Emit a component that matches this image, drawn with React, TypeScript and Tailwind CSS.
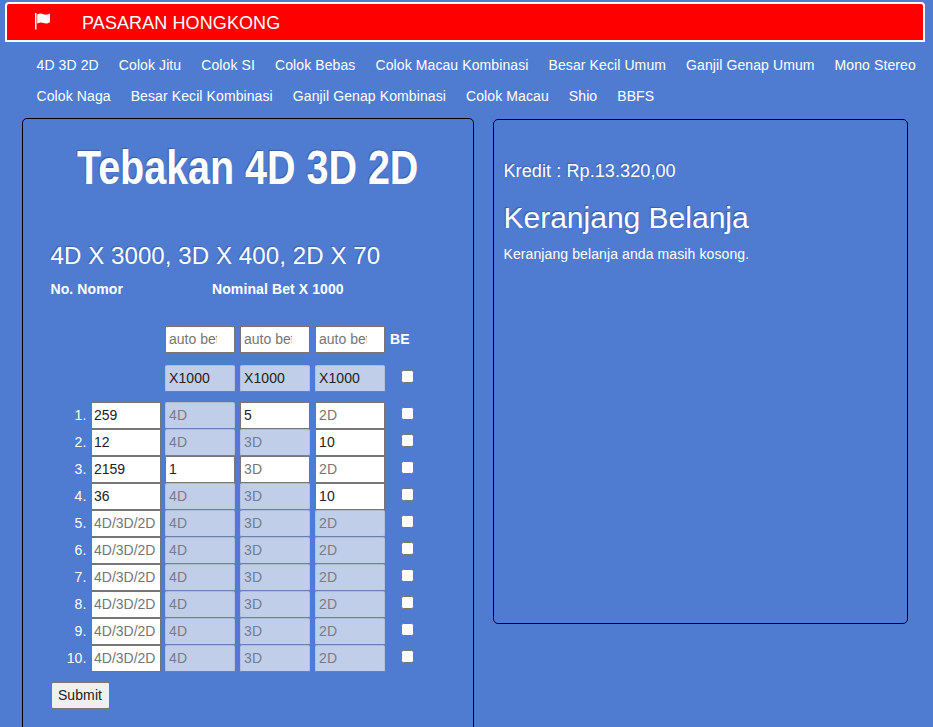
import React from 'react';
import clsx from 'clsx';

interface BetRow {
  nomor?: string;
  // undefined = disabled, '' = open but empty
  bets: [string?, string?, string?];
}

const MENU = [
  '4D 3D 2D',
  'Colok Jitu',
  'Colok SI',
  'Colok Bebas',
  'Colok Macau Kombinasi',
  'Besar Kecil Umum',
  'Ganjil Genap Umum',
  'Mono Stereo',
  'Colok Naga',
  'Besar Kecil Kombinasi',
  'Ganjil Genap Kombinasi',
  'Colok Macau',
  'Shio',
  'BBFS',
];

const BET_TYPES = ['4D', '3D', '2D'];

const ROWS: BetRow[] = [
  { nomor: '259', bets: [undefined, '5', ''] },
  { nomor: '12', bets: [undefined, undefined, '10'] },
  { nomor: '2159', bets: ['1', '', ''] },
  { nomor: '36', bets: [undefined, undefined, '10'] },
  { bets: [] },
  { bets: [] },
  { bets: [] },
  { bets: [] },
  { bets: [] },
  { bets: [] },
];

const Field: React.FC<React.InputHTMLAttributes<HTMLInputElement>> = ({ className, ...props }) => (
  <input
    type="text"
    className={clsx(
      'block h-[27px] w-[70px] shrink-0 rounded-none border border-[#767676] bg-white pb-[2px] text-[14px] text-[#222] placeholder:text-[#757575] placeholder:opacity-100',
      'disabled:rounded-[2px] disabled:border-x-[#b3c0dd] disabled:border-t-[#aebbd8] disabled:border-b-[#6b80ad] disabled:bg-[#c1cee9] disabled:placeholder:text-[#757c8c]',
      className
    )}
    {...props}
  />
);

const Check: React.FC = () => (
  <input
    type="checkbox"
    className="mt-[5px] ml-[11px] block size-[13px] shrink-0 appearance-none rounded-[2.5px] border border-[#767676] bg-white"
  />
);

const App: React.FC = () => {
  return (
    <div className="h-[727px] overflow-hidden bg-[#4f7cd1] font-['Liberation_Sans',Arial,sans-serif] text-[14px] leading-5 tracking-[0.1px] text-white">
      {/* Header */}
      <header className="mx-[5px] flex h-[42px] pt-[2px]">
        <div className="flex w-[920px] items-center rounded-t-[4px] border-2 border-white bg-[#ff0000] pl-[27px] text-[18px]">
          <svg width="17" height="17" viewBox="0 0 17 17" className="-mt-[1px] shrink-0" fill="#fff">
            <path d="M1 0h1.500v16.500H1z" />
            <path d="M3.200 1.500C5.500.3 7.500.4 9.500 1.200c2 .8 3.800.6 6.500-.7v8.800c-2.600 1.400-4.400 1.500-6.400.8-2.200-.8-4.100-.7-6.400.5z" />
          </svg>
          <span className="mt-[2px] ml-[31px]">PASARAN HONGKONG</span>
        </div>
      </header>

      {/* Menu */}
      <nav className="flex flex-wrap pt-[8px] pl-[26.5px]">
        {MENU.map((item) => (
          <a key={item} href="#" className="px-[10px] pt-[5px] pb-[6px]">
            {item}
          </a>
        ))}
      </nav>

      <div className="mt-[6px] flex items-start pl-[22px]">
        {/* Bet form */}
        <section className="h-[640px] w-[452px] shrink-0 rounded-[5px] border border-black pl-[27.5px]">
          <h1 className="mt-[22px] ml-[26px] w-max origin-left scale-x-[0.822] text-[48px] leading-[53px] font-bold tracking-normal whitespace-nowrap [text-shadow:-1px_-1px_1px_rgba(0,0,0,0.25)]">
            Tebakan 4D 3D 2D
          </h1>
          <h3 className="mt-[49px] text-[24px] leading-[26px] [text-shadow:-1px_-1px_1px_rgba(0,0,0,0.2)]">
            4D X 3000, 3D X 400, 2D X 70
          </h3>
          <div className="mt-[10px] flex font-bold">
            <span className="w-[161.5px]">No. Nomor</span>
            <span>Nominal Bet X 1000</span>
          </div>

          <div className="mt-[27px] ml-[114.5px] flex gap-[5px]">
            {BET_TYPES.map((type) => (
              <Field
                key={type}
                placeholder="auto bet"
                className="pr-[17px] pl-[3px] tracking-normal"
              />
            ))}
            <span className="pt-[3px] font-bold">BE</span>
          </div>
          <div className="mt-3 ml-[114.5px] flex gap-[5px]">
            {BET_TYPES.map((type) => (
              <Field key={type} defaultValue="X1000" disabled className="pl-[3px]" />
            ))}
            <Check />
          </div>

          <div className="mt-[10px]">
            {ROWS.map((row, i) => (
              <div key={i} className="flex">
                <span className="w-[36px] pt-[3px] text-right">{i + 1}.</span>
                <Field
                  defaultValue={row.nomor}
                  placeholder="4D/3D/2D"
                  className="mr-[4.5px] ml-[4px] pl-[2.5px] tracking-normal"
                />
                <div className="flex gap-[5px]">
                  {BET_TYPES.map((type, j) => (
                    <Field
                      key={type}
                      defaultValue={row.bets[j]}
                      placeholder={type}
                      disabled={row.bets[j] === undefined}
                      className="pl-[3px]"
                    />
                  ))}
                  <Check />
                </div>
              </div>
            ))}
          </div>

          <button className="mt-[10px] h-[27px] w-[59px] rounded-[2px] border border-[#767676] bg-[#efefef] pb-[2px] text-[#222]">
            Submit
          </button>
        </section>

        {/* Cart */}
        <section className="mt-px ml-[19px] h-[505px] w-[415px] shrink-0 rounded-[5px] border border-black pt-[41px] pl-[9.5px]">
          <h4 className="text-[18px] leading-[20px] [text-shadow:-1px_-1px_1px_rgba(0,0,0,0.2)]">
            Kredit : Rp.13.320,00
          </h4>
          <h2 className="mt-[20px] text-[30px] leading-[33px] tracking-normal [text-shadow:-1px_-1px_1px_rgba(0,0,0,0.25)]">
            Keranjang Belanja
          </h2>
          <p className="mt-[10px]">Keranjang belanja anda masih kosong.</p>
        </section>
      </div>
    </div>
  );
};

export default App;
